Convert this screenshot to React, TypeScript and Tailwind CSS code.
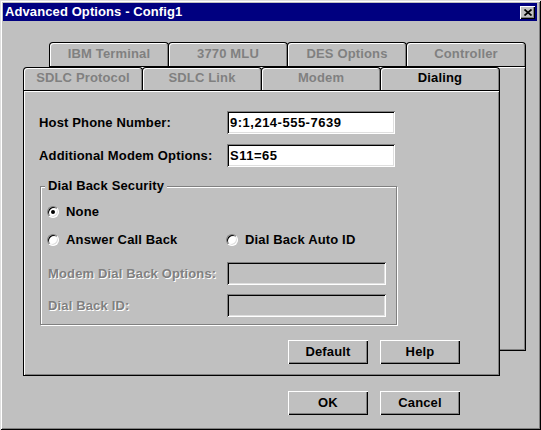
import React from 'react';

const raised = 'shadow-[inset_1px_1px_0_#fff,inset_-1px_-1px_0_#000,inset_-2px_-2px_0_#808080]';
const sunken = 'shadow-[inset_1px_1px_0_#808080,inset_-1px_-1px_0_#fff,inset_2px_2px_0_#000,inset_-2px_-2px_0_#dfdfdf]';

const backTabs = ['IBM Terminal', '3770 MLU', 'DES Options', 'Controller'];
const frontTabs = ['SDLC Protocol', 'SDLC Link', 'Modem', 'Dialing'];

function Tab({ label, active, tall }: { label: string; active?: boolean; tall?: boolean }) {
  return (
    <div
      className={`-ml-px first:ml-0 w-[120px] ${tall ? 'h-[24px] pb-[1px]' : 'h-[23px] pb-[2px]'} flex items-center justify-center border border-b-0 border-black rounded-t-[4px] bg-[#c0c0c0] shadow-[inset_1px_1px_0_#fff,inset_-1px_0_0_#808080] ${active ? 'text-black' : 'text-[#808080]'}`}
    >
      {label}
    </div>
  );
}

function Radio({ checked }: { checked?: boolean }) {
  return (
    <span className="w-[12px] h-[12px] shrink-0 rounded-full bg-white border border-t-[#808080] border-l-[#808080] border-r-white border-b-white shadow-[inset_1px_1px_0_#000,inset_-1px_-1px_0_#dfdfdf] flex items-center justify-center">
      {checked && <span className="w-[4px] h-[4px] rounded-full bg-black" />}
    </span>
  );
}

function Field({ value, disabled, width }: { value?: string; disabled?: boolean; width: string }) {
  return (
    <input
      readOnly
      disabled={disabled}
      defaultValue={value}
      className={`${width} h-[23px] pl-[3px] outline-none tracking-[0.5px] font-bold text-black ${disabled ? 'bg-[#c0c0c0]' : 'bg-white'} ${sunken}`}
    />
  );
}

function Button({ children }: { children: React.ReactNode }) {
  return (
    <button className={`w-[80px] h-[24px] bg-[#c0c0c0] font-bold text-black ${raised}`}>
      {children}
    </button>
  );
}

export default function App() {
  return (
    <div className="w-[541px] h-[430px] bg-[#c0c0c0] pt-[3px] pl-[3px] pr-[4px] shadow-[inset_1px_1px_0_#dfdfdf,inset_-1px_-1px_0_#000,inset_2px_2px_0_#fff,inset_-2px_-2px_0_#808080] font-['Liberation_Sans',Arial,sans-serif] text-[13px] font-bold tracking-[0.15px] text-black select-none">
      {/* Title bar */}
      <div className="h-[18px] bg-[#000080] flex items-center justify-between pl-[2px] pr-[2px]">
        <span className="text-white text-[13px] tracking-[0.1px]">Advanced Options - Config1</span>
        <button className={`w-[15px] h-[13px] bg-[#c0c0c0] flex items-center justify-center ${raised}`}>
          <svg width="8" height="7" viewBox="0 0 8 7">
            <path d="M0.5 0.5 L7.5 6.5 M7.5 0.5 L0.5 6.5" stroke="#000" strokeWidth="1.7" fill="none" />
          </svg>
        </button>
      </div>

      <div className="relative ml-[20px] mt-[21px] w-[503px]">
        {/* Back sheet of tabs */}
        <div className="absolute left-[26px] top-0">
          <div className="flex">
            {backTabs.map((t) => (
              <Tab key={t} label={t} tall />
            ))}
          </div>
          <div className="w-[477px] h-[285px] border border-black bg-[#c0c0c0] shadow-[inset_1px_1px_0_#fff,inset_-1px_-1px_0_#808080]" />
        </div>

        {/* Front sheet */}
        <div className="relative z-10 pt-[25px] w-[477px]">
          <div className="flex">
            {frontTabs.map((t) => (
              <Tab key={t} label={t} active={t === 'Dialing'} />
            ))}
          </div>
          <div className="border border-black bg-[#c0c0c0] shadow-[inset_1px_1px_0_#fff,inset_-1px_-1px_0_#808080] pt-[20px] pl-[15px] pr-[39px] pb-[11px]">
            <div className="flex items-center">
              <span className="w-[188px]">Host Phone Number:</span>
              <Field value="9:1,214-555-7639" width="w-[168px]" />
            </div>
            <div className="flex items-center mt-[10px]">
              <span className="w-[188px]">Additional Modem Options:</span>
              <Field value="S11=65" width="w-[168px]" />
            </div>

            {/* Dial Back Security group */}
            <div className="relative ml-[1px] mt-[19px] w-[357px] border border-[#808080] shadow-[inset_1px_1px_0_#fff,1px_1px_0_#fff] pt-[17px] pl-[6px] pb-[7px]">
              <span className="absolute -top-[9px] left-[4px] px-[3px] leading-[16px] bg-[#c0c0c0]">
                Dial Back Security
              </span>
              <div className="flex items-center h-[16px]">
                <Radio checked />
                <span className="ml-[7px]">None</span>
              </div>
              <div className="flex items-center h-[16px] mt-[12px]">
                <div className="w-[179px] flex items-center">
                  <Radio />
                  <span className="ml-[7px]">Answer Call Back</span>
                </div>
                <Radio />
                <span className="ml-[7px]">Dial Back Auto ID</span>
              </div>
              <div className="flex items-center mt-[14px]">
                <span className="w-[180px] pl-[1px] text-[#808080] [text-shadow:1px_1px_0_#fff]">
                  Modem Dial Back Options:
                </span>
                <Field disabled width="w-[159px]" />
              </div>
              <div className="flex items-center mt-[9px]">
                <span className="w-[180px] pl-[1px] text-[#808080] [text-shadow:1px_1px_0_#fff]">
                  Dial Back ID:
                </span>
                <Field disabled width="w-[159px]" />
              </div>
            </div>

            <div className="flex justify-end gap-[12px] mt-[15px]">
              <Button>Default</Button>
              <Button>Help</Button>
            </div>
          </div>
        </div>

        {/* Dialog buttons */}
        <div className="w-[477px] flex justify-end gap-[12px] pr-[40px] mt-[15px]">
          <Button>OK</Button>
          <Button>Cancel</Button>
        </div>
      </div>
    </div>
  );
}
